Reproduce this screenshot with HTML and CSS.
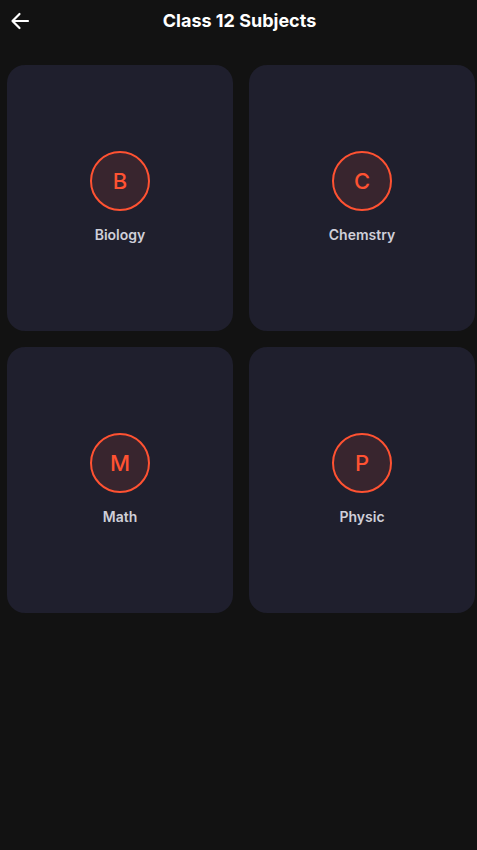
FILE: index.html
```html
<!DOCTYPE html>
<html lang="en">
<head>
<meta charset="utf-8">
<title>Class 12 Subjects</title>
<link rel="stylesheet" href="styles.css">
</head>
<body>
<header class="topbar">
  <button class="back" aria-label="Back">
    <svg width="20" height="18" viewBox="0 0 20 18" fill="none" stroke="#ffffff" stroke-width="2.2" stroke-linecap="round" stroke-linejoin="round">
      <path d="M18 9H2.5M9.5 2L2.5 9l7 7"/>
    </svg>
  </button>
  <h1 class="title">Class 12 Subjects</h1>
</header>
<main class="grid">
  <div class="card"><div class="avatar">B</div><div class="label">Biology</div></div>
  <div class="card"><div class="avatar">C</div><div class="label">Chemstry</div></div>
  <div class="card"><div class="avatar">M</div><div class="label">Math</div></div>
  <div class="card"><div class="avatar">P</div><div class="label">Physic</div></div>
</main>
</body>
</html>
```
FILE: styles.css
```css
* { box-sizing: border-box; }
html, body { margin: 0; padding: 0; }
body {
  background: #121212;
  font-family: Inter, "Noto Sans", sans-serif;
  width: 477px;
  height: 850px;
  overflow: hidden;
}
.topbar {
  position: relative;
  height: 41px;
  display: flex;
  align-items: center;
  justify-content: center;
}
.back {
  position: absolute;
  left: 10px;
  top: 12px;
  width: 20px;
  height: 18px;
  padding: 0;
  border: 0;
  background: none;
  display: flex;
}
.title {
  margin: 0;
  color: #ffffff;
  font-size: 18px;
  font-weight: 700;
  line-height: 41px;
  padding-left: 2px;
}
.grid {
  display: grid;
  grid-template-columns: 226px 226px;
  grid-auto-rows: 266px;
  gap: 16px;
  padding: 24px 0 0 7px;
}
.card {
  background: #1f1f2d;
  border-radius: 18px;
  display: flex;
  flex-direction: column;
  align-items: center;
  justify-content: center;
  gap: 15px;
  padding-bottom: 2px;
}
.avatar {
  width: 60px;
  height: 60px;
  border-radius: 50%;
  border: 2px solid #ff5232;
  background: #38252e;
  color: #ff5232;
  font-size: 22px;
  font-weight: 500;
  display: flex;
  align-items: center;
  justify-content: center;
}
.label {
  color: #cfcfd9;
  font-size: 14px;
  font-weight: 600;
  line-height: 17px;
}
```
